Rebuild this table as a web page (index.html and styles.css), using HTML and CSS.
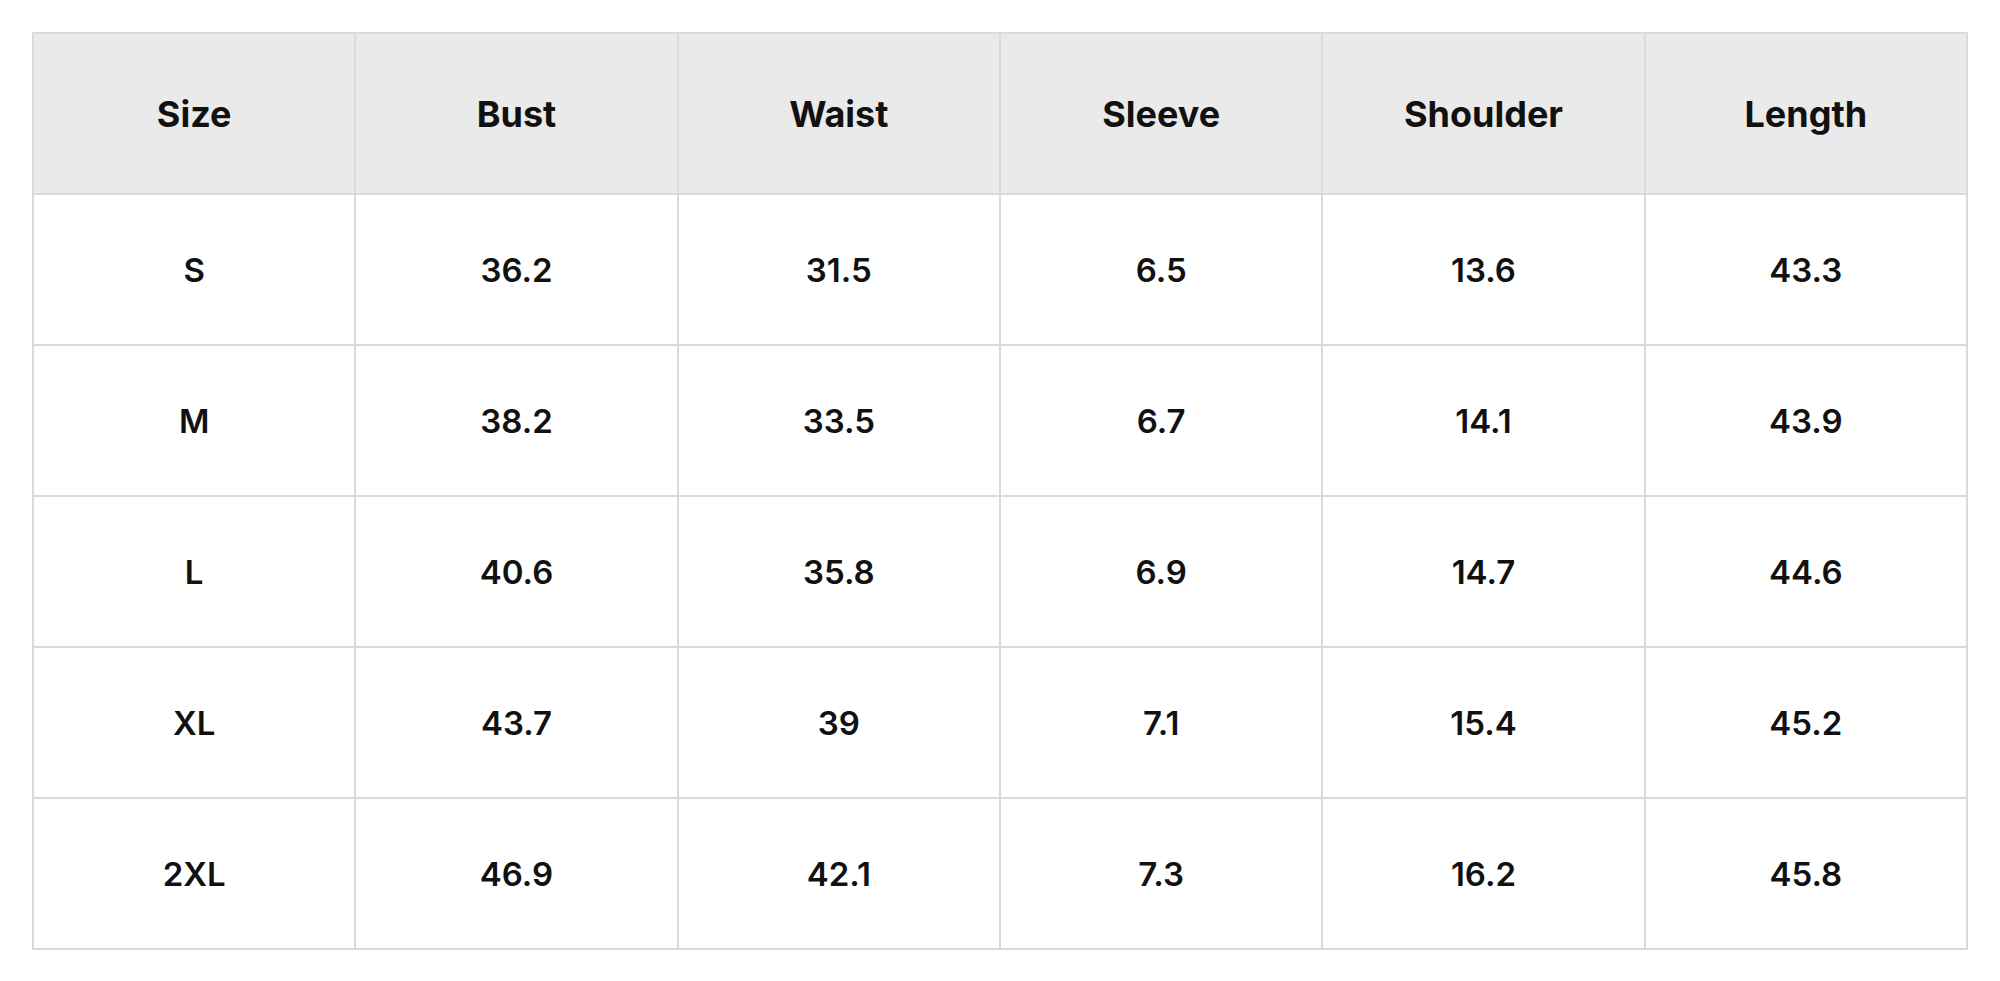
FILE: index.html
```html
<!DOCTYPE html>
<html>
<head>
<meta charset="utf-8">
<link rel="stylesheet" href="styles.css">
</head>
<body>
<div class="wrap">
<table class="size-table">
<thead>
<tr><th>Size</th><th>Bust</th><th>Waist</th><th>Sleeve</th><th>Shoulder</th><th>Length</th></tr>
</thead>
<tbody>
<tr><td>S</td><td>36.2</td><td>31.5</td><td>6.5</td><td>13.6</td><td>43.3</td></tr>
<tr><td>M</td><td>38.2</td><td>33.5</td><td>6.7</td><td>14.1</td><td>43.9</td></tr>
<tr><td>L</td><td>40.6</td><td>35.8</td><td>6.9</td><td>14.7</td><td>44.6</td></tr>
<tr><td>XL</td><td>43.7</td><td>39</td><td>7.1</td><td>15.4</td><td>45.2</td></tr>
<tr><td>2XL</td><td>46.9</td><td>42.1</td><td>7.3</td><td>16.2</td><td>45.8</td></tr>
</tbody>
</table>
</div>
</body>
</html>
```
FILE: styles.css
```css
html, body {
  margin: 0;
  padding: 0;
  background: #ffffff;
}
.wrap {
  padding: 32px;
}
.size-table {
  width: 1936px;
  border-collapse: collapse;
  table-layout: fixed;
  font-family: Inter, "Noto Sans", sans-serif;
  color: #111111;
}
.size-table th,
.size-table td {
  border: 2px solid #dadada;
  text-align: center;
  vertical-align: middle;
  padding: 0;
}
.size-table th {
  background: #eaeaea;
  height: 159px;
  font-size: 36px;
  font-weight: 700;
}
.size-table td {
  height: 149px;
  font-size: 33px;
  font-weight: 600;
}
```
